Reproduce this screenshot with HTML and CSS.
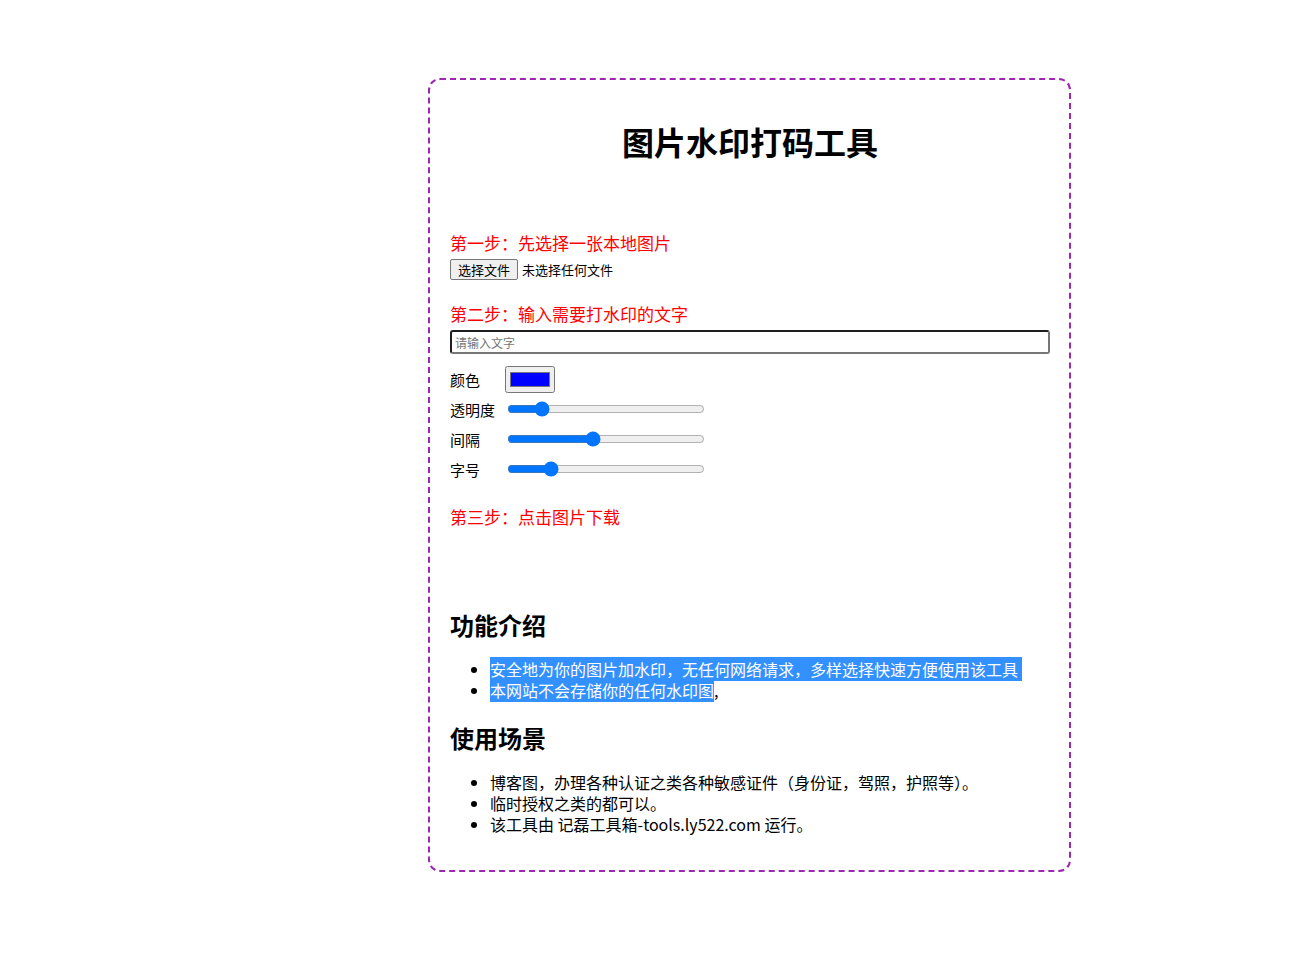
FILE: index.html
```html
<!DOCTYPE html>
<html lang="zh-CN">
<head>
<meta charset="utf-8">
<title>图片水印打码工具</title>
<link rel="stylesheet" href="styles.css">
</head>
<body>
<div class="card">
  <h1 class="title">图片水印打码工具</h1>
  <p class="step step1">第一步：先选择一张本地图片</p>
  <div class="file-row">
    <button class="file-btn" type="button">选择文件</button><span class="file-name">未选择任何文件</span>
  </div>
  <p class="step step2">第二步：输入需要打水印的文字</p>
  <input class="text-input" type="text" placeholder="请输入文字">
  <div class="controls">
    <div class="ctrl-row">
      <span class="ctrl-label">颜色</span>
      <input class="color-input" type="color" value="#0000ff">
    </div>
    <div class="ctrl-row">
      <span class="ctrl-label">透明度</span>
      <input class="range" type="range" min="0" max="100" value="15">
    </div>
    <div class="ctrl-row">
      <span class="ctrl-label">间隔</span>
      <input class="range" type="range" min="0" max="100" value="43">
    </div>
    <div class="ctrl-row">
      <span class="ctrl-label">字号</span>
      <input class="range" type="range" min="0" max="100" value="20">
    </div>
  </div>
  <p class="step step3">第三步：点击图片下载</p>

  <h2 class="sec sec1">功能介绍</h2>
  <ul class="list list1">
    <li><span class="sel">安全地为你的图片加水印，无任何网络请求，多样选择快速方便使用该工具&nbsp;</span></li>
    <li><span class="sel">本网站不会存储你的任何水印图</span>,</li>
  </ul>
  <h2 class="sec sec2">使用场景</h2>
  <ul class="list list2">
    <li>博客图，办理各种认证之类各种敏感证件（身份证，驾照，护照等）。</li>
    <li>临时授权之类的都可以。</li>
    <li>该工具由 记磊工具箱-tools.ly522.com 运行。</li>
  </ul>
</div>
</body>
</html>
```
FILE: styles.css
```css
html, body {
  margin: 0;
  padding: 0;
  background: #ffffff;
}
body {
  font-family: "Noto Sans CJK SC", "Noto Sans", sans-serif;
  color: #000;
}
.card {
  box-sizing: content-box;
  width: 600px;
  margin: 78px 0 0 428px;
  padding: 0 19px 35px 20px;
  border: 2px dashed #9c27b0;
  border-radius: 12px;
}
.title {
  margin: 38px 0 0;
  font-size: 32px;
  line-height: 46px;
  font-weight: 700;
  text-align: center;
}
.step {
  margin: 0;
  font-size: 17px;
  line-height: 24px;
  color: #ff0000;
}
.step1 { margin-top: 67px; }
.file-row {
  margin-top: 3px;
  height: 22px;
  display: flex;
  align-items: center;
  font-size: 13px;
}
.file-btn {
  font-family: inherit;
  font-size: 13px;
  line-height: 17px;
  height: 21px;
  padding: 0 7px;
  margin: 0 4px 0 0;
  border: 1px solid #767676;
  border-radius: 2px;
  background: #efefef;
  color: #000;
}
.file-name {
  font-size: 13px;
  line-height: 17px;
}
.step2 { margin-top: 22px; }
.text-input {
  display: block;
  box-sizing: border-box;
  width: 600px;
  height: 24px;
  margin: 4px 0 0;
  padding: 0 3px;
  border-width: 2px;
  border-style: solid;
  border-color: #1e1e1e #767676 #767676 #1e1e1e;
  border-radius: 3px;
  font-family: inherit;
  font-size: 12px;
  outline: none;
}
.text-input::placeholder {
  color: #757575;
}
.controls {
  margin-top: 10px;
}
.ctrl-row {
  height: 30px;
  display: flex;
  align-items: center;
}
.ctrl-label {
  width: 55px;
  flex: none;
  font-size: 15px;
  line-height: 20px;
  padding-top: 2px;
}
.color-input {
  width: 50px;
  height: 27px;
  margin: 0;
  padding: 1px 2px;
  box-sizing: border-box;
}
.range {
  width: 198px;
  margin: 2px 2px;
}
.step3 { margin-top: 21px; }
.sec {
  margin: 0;
  font-size: 24px;
  line-height: 34px;
  font-weight: 700;
}
.sec1 { margin-top: 79px; }
.sec2 { margin-top: 20px; }
.list {
  margin: 0;
  padding-left: 40px;
  font-size: 16px;
  line-height: 21px;
}
.list1 { margin-top: 17px; }
.list2 { margin-top: 17px; }
.sel {
  background: #3390ff;
  color: #ffffff;
}
```
